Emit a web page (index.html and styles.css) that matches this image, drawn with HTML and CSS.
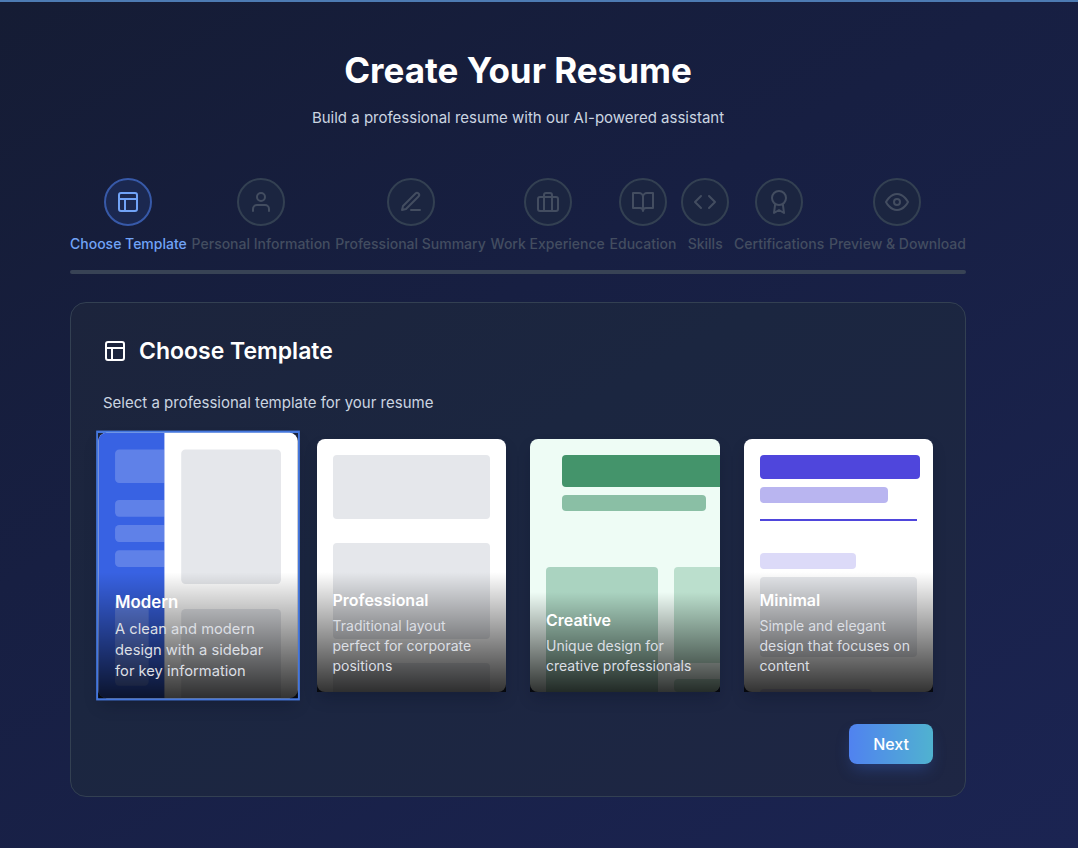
FILE: index.html
```html
<!DOCTYPE html>
<html lang="en">
<head>
<meta charset="utf-8">
<meta name="viewport" content="width=device-width, initial-scale=1">
<title>Create Your Resume</title>
<link rel="stylesheet" href="styles.css">
</head>
<body>
<svg class="sprite" aria-hidden="true">
  <symbol id="i-layout" viewBox="0 0 24 24"><rect x="3" y="3" width="18" height="18" rx="2"/><path d="M3 9h18M9 21V9"/></symbol>
  <symbol id="i-user" viewBox="0 0 24 24"><path d="M20 21v-2a4 4 0 0 0-4-4H8a4 4 0 0 0-4 4v2"/><circle cx="12" cy="7" r="4"/></symbol>
  <symbol id="i-edit" viewBox="0 0 24 24"><path d="M12 20h9M16.500 3.500a2.120 2.120 0 0 1 3 3L7 19l-4 1 1-4Z"/></symbol>
  <symbol id="i-case" viewBox="0 0 24 24"><rect x="2" y="7" width="20" height="14" rx="2"/><path d="M16 21V5a2 2 0 0 0-2-2h-4a2 2 0 0 0-2 2v16"/></symbol>
  <symbol id="i-book" viewBox="0 0 24 24"><path d="M2 3h6a4 4 0 0 1 4 4v14a3 3 0 0 0-3-3H2zM22 3h-6a4 4 0 0 0-4 4v14a3 3 0 0 1 3-3h7z"/></symbol>
  <symbol id="i-code" viewBox="0 0 24 24"><path d="m16 18 6-6-6-6M8 6l-6 6 6 6"/></symbol>
  <symbol id="i-award" viewBox="0 0 24 24"><circle cx="12" cy="8" r="7"/><path d="M8.210 13.890 7 23l5-3 5 3-1.210-9.120"/></symbol>
  <symbol id="i-eye" viewBox="0 0 24 24"><path d="M1 12s4-8 11-8 11 8 11 8-4 8-11 8-11-8-11-8z"/><circle cx="12" cy="12" r="3"/></symbol>
</svg>
<main class="page">
  <div class="wizard">
    <header class="intro">
      <h1 class="intro-title">Create Your Resume</h1>
      <p class="intro-text">Build a professional resume with our AI-powered assistant</p>
    </header>

    <ol class="steps">
      <li class="step step-active" aria-current="step"><span class="step-dot"><svg class="icon"><use href="#i-layout"/></svg></span><span>Choose Template</span></li>
      <li class="step"><span class="step-dot"><svg class="icon"><use href="#i-user"/></svg></span><span>Personal Information</span></li>
      <li class="step"><span class="step-dot"><svg class="icon"><use href="#i-edit"/></svg></span><span>Professional Summary</span></li>
      <li class="step"><span class="step-dot"><svg class="icon"><use href="#i-case"/></svg></span><span>Work Experience</span></li>
      <li class="step"><span class="step-dot"><svg class="icon"><use href="#i-book"/></svg></span><span>Education</span></li>
      <li class="step"><span class="step-dot"><svg class="icon"><use href="#i-code"/></svg></span><span>Skills</span></li>
      <li class="step"><span class="step-dot"><svg class="icon"><use href="#i-award"/></svg></span><span>Certifications</span></li>
      <li class="step"><span class="step-dot"><svg class="icon"><use href="#i-eye"/></svg></span><span>Preview &amp; Download</span></li>
    </ol>
    <div class="track"></div>

    <section class="panel">
      <h2 class="panel-title"><svg class="icon"><use href="#i-layout"/></svg>Choose Template</h2>
      <p class="panel-text">Select a professional template for your resume</p>

      <div class="templates">
        <button type="button" class="template template-selected" aria-pressed="true">
          <span class="sheet sheet-modern">
            <span class="sidebar">
              <span class="block h32"></span>
              <span class="side-lines"><span class="block h16"></span><span class="block h16"></span><span class="block h16"></span></span>
              <span class="block side-end"></span>
            </span>
            <span class="content"><span class="block h128"></span><span class="block fill"></span></span>
          </span>
          <span class="caption"><span class="name">Modern</span><span class="about">A clean and modern design with a sidebar for key information</span></span>
        </button>
        <button type="button" class="template" aria-pressed="false">
          <span class="sheet sheet-professional"><span class="block h64"></span><span class="block h96"></span><span class="block fill"></span></span>
          <span class="caption"><span class="name">Professional</span><span class="about">Traditional layout perfect for corporate positions</span></span>
        </button>
        <button type="button" class="template" aria-pressed="false">
          <span class="sheet sheet-creative">
            <span class="heading"><span class="block bar"></span><span class="block subbar"></span></span>
            <span class="columns"><span class="block lead"></span><span class="aside"><span class="block h96"></span><span class="block fill"></span></span></span>
          </span>
          <span class="caption"><span class="name">Creative</span><span class="about">Unique design for creative professionals</span></span>
        </button>
        <button type="button" class="template" aria-pressed="false">
          <span class="sheet sheet-minimal">
            <span class="block bar"></span><span class="block subbar"></span><span class="rule"></span>
            <span class="block tag"></span><span class="block body"></span><span class="block foot"></span>
          </span>
          <span class="caption"><span class="name">Minimal</span><span class="about">Simple and elegant design that focuses on content</span></span>
        </button>
      </div>

      <div class="actions"><button type="button" class="next">Next</button></div>
    </section>
  </div>
</main>
</body>
</html>
```
FILE: styles.css
```css
* { box-sizing: border-box; }

body {
  margin: 0;
  min-height: 100vh;
  border-top: 2px solid #4d7bb3;
  background: linear-gradient(150deg, #151c34 0%, #171f42 40%, #1b2452 100%);
  color: #fff;
  font-family: Inter, "Open Sans", sans-serif;
  font-size: 16px;
  line-height: 24px;
}

h1, h2, p, ol { margin: 0; padding: 0; }

button { font: inherit; color: inherit; border: 0; cursor: pointer; }

.sprite { display: none; }

.icon {
  width: 24px;
  height: 24px;
  flex: none;
  fill: none;
  stroke: currentColor;
  stroke-width: 2;
  stroke-linecap: round;
  stroke-linejoin: round;
}

.page { padding: 48px 42px 48px 0; }

.wizard { max-width: 896px; margin: 0 auto; }

.intro { text-align: center; margin-bottom: 48px; }

.intro-title {
  margin-bottom: 16px;
  font-size: 35px;
  line-height: 40px;
  font-weight: 700;
}

.intro-text { color: #cbd5e1; font-size: 15px; }

.steps {
  display: flex;
  justify-content: space-between;
  margin-bottom: 16px;
  list-style: none;
}

.step {
  display: flex;
  flex-direction: column;
  align-items: center;
  gap: 8px;
  color: #434d60;
  font-size: 14px;
  line-height: 20px;
  font-weight: 500;
  white-space: nowrap;
}

.step-dot {
  display: grid;
  place-items: center;
  width: 48px;
  height: 48px;
  border: 2px solid #334052;
  border-radius: 50%;
  background: #1b2540;
}

.step-active { color: #71a3f7; }

.step-active .step-dot { border-color: #3759a8; background: #1b2850; }

.track {
  height: 4px;
  margin-bottom: 28px;
  border-radius: 4px;
  background: #384355;
}

.panel {
  padding: 32px;
  border: 1px solid #334052;
  border-radius: 16px;
  background: linear-gradient(150deg, #1c243c, #1b2640 40%, #1e2644);
}

.panel-title {
  display: flex;
  align-items: center;
  gap: 12px;
  margin-bottom: 24px;
  font-size: 23px;
  line-height: 32px;
  font-weight: 600;
}

.panel-text { margin-bottom: 24px; color: #cbd5e1; font-size: 15px; }

.templates {
  display: grid;
  grid-template-columns: repeat(4, minmax(0, 1fr));
  gap: 24px;
}

.template {
  position: relative;
  aspect-ratio: 3 / 4;
  padding: 0;
  background: none;
  text-align: left;
  box-shadow: 0 8px 14px -4px rgba(10, 15, 35, 0.35);
}

.template-selected {
  transform: scale(1.05);
  box-shadow: 0 0 0 2px #4577dd, 0 8px 14px -4px rgba(10, 15, 35, 0.35);
}

.sheet {
  display: flex;
  flex-direction: column;
  height: 100%;
  overflow: hidden;
  border-radius: 8px;
  background: #fff;
}

.block { flex: none; border-radius: 4px; background: #e5e7eb; }

.h16 { height: 16px; }
.h32 { height: 32px; }
.h64 { height: 64px; }
.h96 { height: 96px; }
.h128 { height: 128px; }
.fill { flex: 1; border-radius: 4px 4px 0 0; }

.sheet-modern { flex-direction: row; }

.sidebar {
  display: flex;
  flex-direction: column;
  gap: 16px;
  width: 33.33%;
  padding: 16px 0 12px 16px;
  background: #3862e3;
}

.sidebar .block {
  border-radius: 4px 0 0 4px;
  background: rgba(255, 255, 255, 0.2);
}

.side-lines { display: flex; flex-direction: column; gap: 8px; padding-bottom: 16px; }

.sidebar .side-end { flex: 1; width: 32px; border-radius: 4px; }

.content {
  display: flex;
  flex: 1;
  flex-direction: column;
  gap: 24px;
  padding: 16px 16px 0;
}

.sheet-professional { gap: 24px; padding: 16px 16px 0; }

.sheet-creative {
  gap: 56px;
  padding: 16px 0 0 16px;
  background: #eefcf5;
}

.heading { display: flex; flex-direction: column; gap: 8px; padding-left: 16px; }

.heading .bar { height: 32px; border-radius: 4px 0 0 4px; background: #44946b; }

.heading .subbar { width: 144px; height: 16px; background: #8abfa5; }

.columns { display: flex; flex: 1; gap: 16px; }

.columns .lead { width: 112px; border-radius: 4px 4px 0 0; background: #aad3c0; }

.aside { display: flex; flex: 1; flex-direction: column; gap: 16px; }

.aside .block { border-radius: 4px 0 0 4px; background: #bbdfcd; }

.sheet-minimal { padding: 16px 16px 0; }

.sheet-minimal .bar { width: 160px; height: 24px; margin-bottom: 8px; background: #4f46dc; }

.sheet-minimal .subbar { width: 128px; height: 16px; margin-bottom: 16px; background: #b9b5f0; }

.rule { flex: none; height: 2px; margin-bottom: 32px; background: #4f46dc; }

.sheet-minimal .tag { width: 96px; height: 16px; margin-bottom: 8px; background: #dcdaf8; }

.sheet-minimal .body { height: 80px; margin-bottom: 32px; }

.sheet-minimal .foot { width: 112px; height: 16px; background: #dcdaf8; }

/* Caption lies over the preview sheet */
.caption {
  position: absolute;
  inset: auto 0 0;
  display: flex;
  flex-direction: column;
  gap: 4px;
  padding: 16px;
  background: linear-gradient(to top, rgba(0, 0, 0, 0.8), transparent);
}

.name { font-weight: 600; }

.about { color: #dcdfe4; font-size: 14px; line-height: 20px; }

.actions { display: flex; justify-content: flex-end; margin-top: 32px; }

.next {
  padding: 8px 24px;
  border-radius: 8px;
  background: linear-gradient(to right, #5082f0, #50b2d0);
  font-weight: 500;
  box-shadow: 0 8px 16px -4px rgba(59, 108, 220, 0.35);
}
```
